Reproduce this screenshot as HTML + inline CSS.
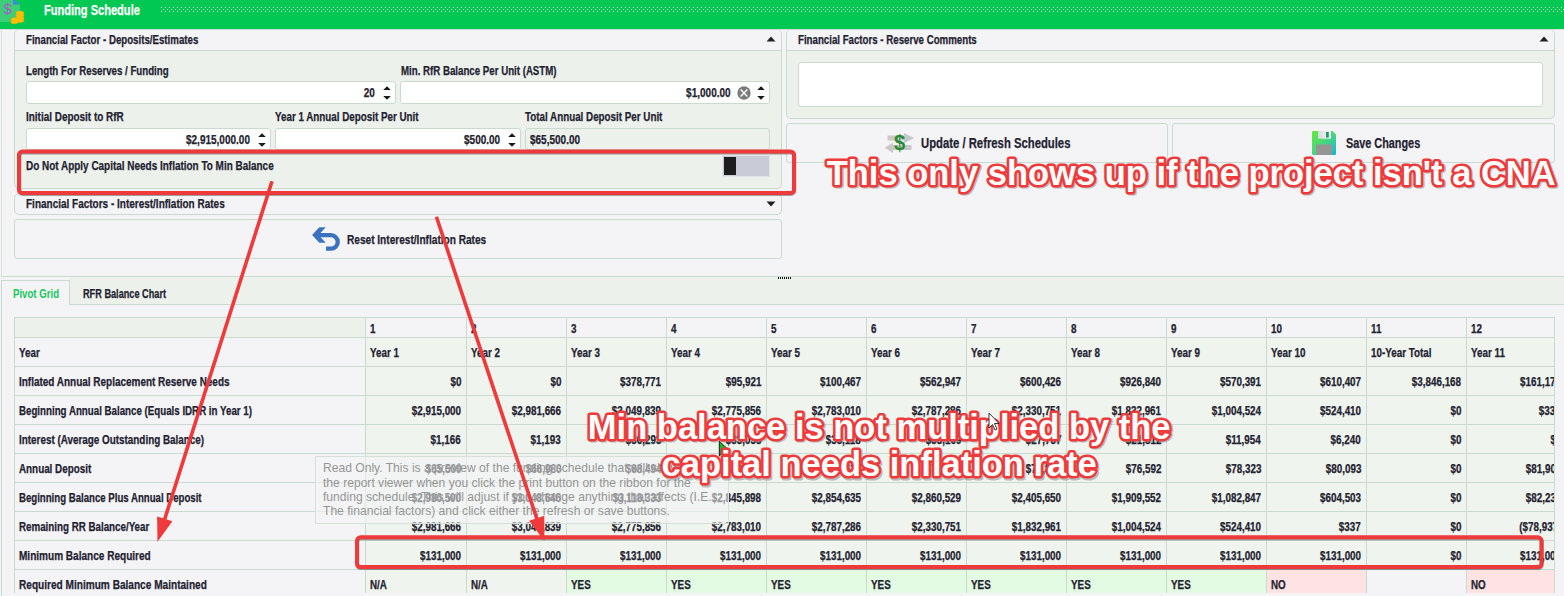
<!DOCTYPE html>
<html><head><meta charset="utf-8"><style>
html,body{margin:0;padding:0}
body{width:1564px;height:596px;overflow:hidden;position:relative;background:#f4f4f6;font-family:"Liberation Sans",sans-serif}
.r{position:absolute}
.tx{position:absolute;white-space:nowrap;line-height:normal;-webkit-text-stroke:0.25px currentColor}
</style></head><body>
<div class="r" style="left:0px;top:0px;width:1564px;height:29px;background:#00c853"></div>
<div class="r" style="left:0px;top:29px;width:1564px;height:1px;background:#dcdcdc"></div>
<svg class="r" style="left:160px;top:6px" width="1404" height="7"><defs><pattern id="dp" width="4" height="4" patternUnits="userSpaceOnUse"><rect x="1" y="1" width="1" height="1" fill="#c8f2d6"/><rect x="3" y="3" width="1" height="1" fill="#c8f2d6"/></pattern></defs><rect x="0" y="0" width="1404" height="7" fill="url(#dp)"/></svg>
<svg class="r" style="left:0;top:0" width="30" height="28" viewBox="0 0 30 28">
<rect x="0" y="0" width="20" height="22" fill="#3ccf78"/>
<path d="M15 0 L20 0 L20 5 Z" fill="#00c853"/>
<path d="M13 0 L15 0 L19.6 4.6 L13 4.6 Z" fill="#3d86e0"/>
<text x="3.4" y="14.2" font-family="Liberation Sans" font-size="15" fill="#a85cc8">$</text>
<g fill="#ffc400" stroke="#f0a800" stroke-width="0.6">
<ellipse cx="20" cy="20.5" rx="3.9" ry="1.9"/><ellipse cx="20" cy="18" rx="3.9" ry="1.9"/><ellipse cx="20" cy="15.5" rx="3.9" ry="1.9"/><ellipse cx="20" cy="13" rx="3.9" ry="1.9"/>
<ellipse cx="14.5" cy="22" rx="3.6" ry="1.8"/><ellipse cx="14.5" cy="19.5" rx="3.6" ry="1.8"/>
</g></svg>
<div class="tx" style="left:44px;top:2.33px;font-size:14px;font-weight:bold;color:#ffffff;transform:scaleX(0.79);transform-origin:0 0;">Funding Schedule</div>
<div class="r" style="left:1px;top:30px;width:1px;height:247px;background:#d6e2da"></div>
<div class="r" style="left:14px;top:29px;width:768px;height:160px;background:#ecf1ec;border:1px solid #c9dbcf;border-radius:5px;box-sizing:border-box"></div>
<div class="r" style="left:15px;top:30px;width:766px;height:20px;background:#f4f4f6;border-radius:4px 4px 0 0"></div>
<div class="r" style="left:14px;top:50px;width:768px;height:1px;background:#c9dbcf"></div>
<div class="tx" style="left:26px;top:32.69px;font-size:12.5px;font-weight:bold;color:#1f2230;transform:scaleX(0.775);transform-origin:0 0;">Financial Factor - Deposits/Estimates</div>
<svg class="r" style="left:766px;top:36px" width="10" height="6"><path d="M0.5 5.5 L5 0.5 L9.5 5.5 Z" fill="#222"/></svg>
<div class="tx" style="left:26px;top:63.69px;font-size:12.5px;font-weight:bold;color:#1f2230;transform:scaleX(0.775);transform-origin:0 0;">Length For Reserves / Funding</div>
<div class="tx" style="left:401px;top:63.69px;font-size:12.5px;font-weight:bold;color:#1f2230;transform:scaleX(0.775);transform-origin:0 0;">Min. RfR Balance Per Unit (ASTM)</div>
<div class="r" style="left:26px;top:81px;width:370px;height:23px;background:#ffffff;border:1px solid #c9dbcf;border-radius:3px;box-sizing:border-box"></div>
<div class="tx" style="right:1189.5px;top:85.69px;font-size:12.5px;font-weight:bold;color:#1f2230;transform:scaleX(0.8);transform-origin:100% 0;">20</div>
<svg class="r" style="left:382px;top:86px" width="10" height="14"><path d="M1.2 3.9 L5 0.2 L8.8 3.9 Z M1.2 9.9 L5 13.7 L8.8 9.9 Z" fill="#1a1a1a"/></svg>
<div class="r" style="left:400px;top:81px;width:370px;height:23px;background:#ffffff;border:1px solid #c9dbcf;border-radius:3px;box-sizing:border-box"></div>
<div class="tx" style="right:833.5px;top:85.69px;font-size:12.5px;font-weight:bold;color:#1f2230;transform:scaleX(0.8);transform-origin:100% 0;">$1,000.00</div>
<svg class="r" style="left:737px;top:86px" width="14" height="14"><circle cx="7" cy="7" r="6.7" fill="#7b7b7b"/><path d="M3.6 3.6 L10.4 10.4 M10.4 3.6 L3.6 10.4" stroke="#fff" stroke-width="1.35"/></svg>
<svg class="r" style="left:756px;top:86px" width="10" height="14"><path d="M1.2 3.9 L5 0.2 L8.8 3.9 Z M1.2 9.9 L5 13.7 L8.8 9.9 Z" fill="#1a1a1a"/></svg>
<div class="tx" style="left:26px;top:109.69px;font-size:12.5px;font-weight:bold;color:#1f2230;transform:scaleX(0.795);transform-origin:0 0;">Initial Deposit to RfR</div>
<div class="tx" style="left:275px;top:109.69px;font-size:12.5px;font-weight:bold;color:#1f2230;transform:scaleX(0.785);transform-origin:0 0;">Year 1 Annual Deposit Per Unit</div>
<div class="tx" style="left:525px;top:109.69px;font-size:12.5px;font-weight:bold;color:#1f2230;transform:scaleX(0.785);transform-origin:0 0;">Total Annual Deposit Per Unit</div>
<div class="r" style="left:26px;top:128px;width:245px;height:22px;background:#ffffff;border:1px solid #c9dbcf;border-radius:3px;box-sizing:border-box"></div>
<div class="tx" style="right:1314px;top:132.69px;font-size:12.5px;font-weight:bold;color:#1f2230;transform:scaleX(0.8);transform-origin:100% 0;">$2,915,000.00</div>
<svg class="r" style="left:257px;top:133px" width="10" height="14"><path d="M1.2 3.9 L5 0.2 L8.8 3.9 Z M1.2 9.9 L5 13.7 L8.8 9.9 Z" fill="#1a1a1a"/></svg>
<div class="r" style="left:275px;top:128px;width:246px;height:22px;background:#ffffff;border:1px solid #c9dbcf;border-radius:3px;box-sizing:border-box"></div>
<div class="tx" style="right:1064px;top:132.69px;font-size:12.5px;font-weight:bold;color:#1f2230;transform:scaleX(0.8);transform-origin:100% 0;">$500.00</div>
<svg class="r" style="left:507px;top:133px" width="10" height="14"><path d="M1.2 3.9 L5 0.2 L8.8 3.9 Z M1.2 9.9 L5 13.7 L8.8 9.9 Z" fill="#1a1a1a"/></svg>
<div class="r" style="left:525px;top:128px;width:245px;height:22px;background:#ecf1ec;border:1px solid #c9dbcf;border-radius:3px;box-sizing:border-box"></div>
<div class="tx" style="left:530px;top:132.69px;font-size:12.5px;font-weight:bold;color:#1f2230;transform:scaleX(0.8);transform-origin:0 0;">$65,500.00</div>
<div class="tx" style="left:26px;top:158.69px;font-size:12.5px;font-weight:bold;color:#1f2230;transform:scaleX(0.796);transform-origin:0 0;">Do Not Apply Capital Needs Inflation To Min Balance</div>
<div class="r" style="left:722px;top:155px;width:48px;height:22px;background:#c9cbd7;border:1px solid #e2e4ea;box-sizing:border-box"></div>
<div class="r" style="left:724px;top:157px;width:12px;height:18px;background:#1d1d1d"></div>
<div class="r" style="left:14px;top:193px;width:768px;height:22px;background:#f4f4f6;border:1px solid #c9dbcf;border-radius:5px;box-sizing:border-box"></div>
<div class="tx" style="left:26px;top:196.69px;font-size:12.5px;font-weight:bold;color:#1f2230;transform:scaleX(0.799);transform-origin:0 0;">Financial Factors - Interest/Inflation Rates</div>
<svg class="r" style="left:766px;top:201px" width="10" height="6"><path d="M0.5 0.5 L5 5.5 L9.5 0.5 Z" fill="#222"/></svg>
<div class="r" style="left:14px;top:219px;width:768px;height:40px;background:#f4f4f6;border:1px solid #c9dbcf;border-radius:3px;box-sizing:border-box"></div>
<svg class="r" style="left:300px;top:220px" width="50" height="36" viewBox="300 220 50 36">
<path d="M319.3 227.3 L325.7 227.3 L318.6 234.9 L325.7 242.7 L319.3 242.7 L312.1 234.9 Z" fill="#3b72c0"/>
<path d="M318 235.2 L331 235.2 A 6.75 6.75 0 0 1 331 248.7 L326 248.7" fill="none" stroke="#3b72c0" stroke-width="4.3"/></svg>
<div class="tx" style="left:347px;top:232.24px;font-size:13px;font-weight:bold;color:#1f2230;transform:scaleX(0.777);transform-origin:0 0;">Reset Interest/Inflation Rates</div>
<div class="r" style="left:786px;top:29px;width:769px;height:90px;background:#ecf1ec;border:1px solid #c9dbcf;border-radius:5px;box-sizing:border-box"></div>
<div class="r" style="left:787px;top:30px;width:767px;height:20px;background:#f4f4f6;border-radius:4px 4px 0 0"></div>
<div class="r" style="left:786px;top:50px;width:769px;height:1px;background:#c9dbcf"></div>
<div class="tx" style="left:798px;top:32.69px;font-size:12.5px;font-weight:bold;color:#1f2230;transform:scaleX(0.775);transform-origin:0 0;">Financial Factors - Reserve Comments</div>
<svg class="r" style="left:1539px;top:36px" width="10" height="6"><path d="M0.5 5.5 L5 0.5 L9.5 5.5 Z" fill="#222"/></svg>
<div class="r" style="left:798px;top:62px;width:745px;height:45px;background:#fff;border:1px solid #c9dbcf;border-radius:3px;box-sizing:border-box"></div>
<div class="r" style="left:786px;top:123px;width:382px;height:40px;background:#f4f4f6;border:1px solid #c9dbcf;border-radius:3px;box-sizing:border-box"></div>
<svg class="r" style="left:880px;top:128px" width="40" height="30" viewBox="880 128 40 30">
<path d="M887.5 135.6 L904 135.6 L904 133 L914 138 L904 143.2 L904 140.4 L887.5 140.4 Z" fill="#c8c8c8"/>
<path d="M911.5 145 L893 145 L893 142.5 L884.8 147.7 L893 153 L893 150 L911.5 150 Z" fill="#c8c8c8"/>
<text x="899.6" y="150.5" text-anchor="middle" font-family="Liberation Sans" font-weight="bold" font-size="22" fill="#2a8a36" transform="translate(899.6 0) scale(0.92 1) translate(-899.6 0)">$</text></svg>
<div class="tx" style="left:920.5px;top:135.33px;font-size:14px;font-weight:bold;color:#1f2230;transform:scaleX(0.807);transform-origin:0 0;">Update / Refresh Schedules</div>
<div class="r" style="left:1172px;top:123px;width:383px;height:40px;background:#f4f4f6;border:1px solid #c9dbcf;border-radius:3px;box-sizing:border-box"></div>
<svg class="r" style="left:1312px;top:131px" width="24" height="24" viewBox="0 0 24 24">
<defs><linearGradient id="fg" x1="0" y1="0" x2="1" y2="1"><stop offset="0" stop-color="#62ea3c"/><stop offset="0.5" stop-color="#48d67e"/><stop offset="1" stop-color="#1ab4d8"/></linearGradient>
<linearGradient id="sg" x1="0" y1="0" x2="1" y2="0"><stop offset="0" stop-color="#d8d8d8"/><stop offset="1" stop-color="#f6f6f6"/></linearGradient></defs>
<path d="M1 0 L20.5 0 L24 3.5 L24 22.8 Q24 24 22.8 24 L1.2 24 Q0 24 0 22.8 L0 1.2 Q0 0 1 0 Z" fill="url(#fg)"/>
<path d="M6 0 L19 0 L19 6.8 Q19 7.7 18 7.7 L7 7.7 Q6 7.7 6 6.8 Z" fill="url(#sg)"/><rect x="14" y="1" width="2.8" height="5.6" fill="#1f9a6a"/>
<path d="M4 14.5 Q4 13.5 5 13.5 L19 13.5 Q20 13.5 20 14.5 L20 24 L4 24 Z" fill="#959595"/></svg>
<div class="tx" style="left:1345.5px;top:135.33px;font-size:14px;font-weight:bold;color:#1f2230;transform:scaleX(0.775);transform-origin:0 0;">Save Changes</div>
<div class="r" style="left:1px;top:276px;width:1564px;height:1px;background:#c9dbcf"></div>
<div class="r" style="left:70px;top:277px;width:1564px;height:28px;background:#ecf1ec"></div>
<div class="r" style="left:1px;top:304px;width:1564px;height:1px;background:#c9dbcf"></div>
<div class="r" style="left:1px;top:280px;width:69px;height:25px;background:#f4f4f6;border:1px solid #c9dbcf;border-bottom:none;box-sizing:border-box"></div>
<svg class="r" style="left:778px;top:277px" width="14" height="3"><g fill="#111"><rect x="0" y="0" width="1" height="2"/><rect x="2" y="0" width="1" height="2"/><rect x="4" y="0" width="1" height="2"/><rect x="6" y="0" width="1" height="2"/><rect x="8" y="0" width="1" height="2"/><rect x="10" y="0" width="1" height="2"/><rect x="12" y="0" width="1" height="2"/></g></svg>
<div class="r" style="left:1px;top:305px;width:1px;height:291px;background:#c9dbcf"></div>
<div class="tx" style="left:12.8px;top:286.96px;font-size:12.2px;font-weight:bold;color:#16c75e;transform:scaleX(0.79);transform-origin:0 0;-webkit-text-stroke:0">Pivot Grid</div>
<div class="tx" style="left:83px;top:286.96px;font-size:12.2px;font-weight:bold;color:#1f2230;transform:scaleX(0.752);transform-origin:0 0;">RFR Balance Chart</div>
<div class="r" style="left:14px;top:317px;width:1541px;height:276px;overflow:hidden">
<div class="r" style="left:0px;top:0px;width:351px;height:20px;background:#ecf1ec"></div>
<div class="r" style="left:0px;top:20px;width:351px;height:256px;background:#f4f4f6"></div>
<div class="r" style="left:351px;top:0px;width:1201px;height:20px;background:#f4f4f6"></div>
<div class="r" style="left:351px;top:20px;width:1201px;height:256px;background:#f0f4ef"></div>
<div class="r" style="left:553px;top:253px;width:99px;height:28px;background:#e3fbe3"></div>
<div class="r" style="left:653px;top:253px;width:99px;height:28px;background:#e3fbe3"></div>
<div class="r" style="left:753px;top:253px;width:99px;height:28px;background:#e3fbe3"></div>
<div class="r" style="left:853px;top:253px;width:99px;height:28px;background:#e3fbe3"></div>
<div class="r" style="left:953px;top:253px;width:99px;height:28px;background:#e3fbe3"></div>
<div class="r" style="left:1053px;top:253px;width:99px;height:28px;background:#e3fbe3"></div>
<div class="r" style="left:1153px;top:253px;width:99px;height:28px;background:#e3fbe3"></div>
<div class="r" style="left:1253px;top:253px;width:99px;height:28px;background:#ffe3e3"></div>
<div class="r" style="left:1353px;top:253px;width:99px;height:28px;background:#f4f4f6"></div>
<div class="r" style="left:1453px;top:253px;width:99px;height:28px;background:#ffe3e3"></div>
<div class="r" style="left:0px;top:0px;width:1552px;height:1px;background:#c9dbcf"></div>
<div class="r" style="left:0px;top:20px;width:1552px;height:1px;background:#c9dbcf"></div>
<div class="r" style="left:0px;top:49px;width:1552px;height:1px;background:#c9dbcf"></div>
<div class="r" style="left:0px;top:78px;width:1552px;height:1px;background:#c9dbcf"></div>
<div class="r" style="left:0px;top:107px;width:1552px;height:1px;background:#c9dbcf"></div>
<div class="r" style="left:0px;top:136px;width:1552px;height:1px;background:#c9dbcf"></div>
<div class="r" style="left:0px;top:165px;width:1552px;height:1px;background:#c9dbcf"></div>
<div class="r" style="left:0px;top:194px;width:1552px;height:1px;background:#c9dbcf"></div>
<div class="r" style="left:0px;top:223px;width:1552px;height:1px;background:#c9dbcf"></div>
<div class="r" style="left:0px;top:252px;width:1552px;height:1px;background:#c9dbcf"></div>
<div class="r" style="left:0px;top:281px;width:1552px;height:1px;background:#c9dbcf"></div>
<div class="r" style="left:0px;top:0px;width:1px;height:280px;background:#c9dbcf"></div>
<div class="r" style="left:351px;top:0px;width:1px;height:280px;background:#c9dbcf"></div>
<div class="r" style="left:452px;top:0px;width:1px;height:280px;background:#c9dbcf"></div>
<div class="r" style="left:552px;top:0px;width:1px;height:280px;background:#c9dbcf"></div>
<div class="r" style="left:652px;top:0px;width:1px;height:280px;background:#c9dbcf"></div>
<div class="r" style="left:752px;top:0px;width:1px;height:280px;background:#c9dbcf"></div>
<div class="r" style="left:852px;top:0px;width:1px;height:280px;background:#c9dbcf"></div>
<div class="r" style="left:952px;top:0px;width:1px;height:280px;background:#c9dbcf"></div>
<div class="r" style="left:1052px;top:0px;width:1px;height:280px;background:#c9dbcf"></div>
<div class="r" style="left:1152px;top:0px;width:1px;height:280px;background:#c9dbcf"></div>
<div class="r" style="left:1252px;top:0px;width:1px;height:280px;background:#c9dbcf"></div>
<div class="r" style="left:1352px;top:0px;width:1px;height:280px;background:#c9dbcf"></div>
<div class="r" style="left:1452px;top:0px;width:1px;height:280px;background:#c9dbcf"></div>
<div class="r" style="left:1552px;top:0px;width:1px;height:280px;background:#c9dbcf"></div>
<div class="tx" style="left:5px;top:29.14px;font-size:12px;font-weight:bold;color:#1f2230;transform:scaleX(0.82);transform-origin:0 0">Year</div>
<div class="tx" style="left:356px;top:5.14px;font-size:12px;font-weight:bold;color:#1f2230;transform:scaleX(0.82);transform-origin:0 0">1</div>
<div class="tx" style="left:356px;top:29.14px;font-size:12px;font-weight:bold;color:#1f2230;transform:scaleX(0.82);transform-origin:0 0">Year 1</div>
<div class="tx" style="left:457px;top:5.14px;font-size:12px;font-weight:bold;color:#1f2230;transform:scaleX(0.82);transform-origin:0 0">2</div>
<div class="tx" style="left:457px;top:29.14px;font-size:12px;font-weight:bold;color:#1f2230;transform:scaleX(0.82);transform-origin:0 0">Year 2</div>
<div class="tx" style="left:557px;top:5.14px;font-size:12px;font-weight:bold;color:#1f2230;transform:scaleX(0.82);transform-origin:0 0">3</div>
<div class="tx" style="left:557px;top:29.14px;font-size:12px;font-weight:bold;color:#1f2230;transform:scaleX(0.82);transform-origin:0 0">Year 3</div>
<div class="tx" style="left:657px;top:5.14px;font-size:12px;font-weight:bold;color:#1f2230;transform:scaleX(0.82);transform-origin:0 0">4</div>
<div class="tx" style="left:657px;top:29.14px;font-size:12px;font-weight:bold;color:#1f2230;transform:scaleX(0.82);transform-origin:0 0">Year 4</div>
<div class="tx" style="left:757px;top:5.14px;font-size:12px;font-weight:bold;color:#1f2230;transform:scaleX(0.82);transform-origin:0 0">5</div>
<div class="tx" style="left:757px;top:29.14px;font-size:12px;font-weight:bold;color:#1f2230;transform:scaleX(0.82);transform-origin:0 0">Year 5</div>
<div class="tx" style="left:857px;top:5.14px;font-size:12px;font-weight:bold;color:#1f2230;transform:scaleX(0.82);transform-origin:0 0">6</div>
<div class="tx" style="left:857px;top:29.14px;font-size:12px;font-weight:bold;color:#1f2230;transform:scaleX(0.82);transform-origin:0 0">Year 6</div>
<div class="tx" style="left:957px;top:5.14px;font-size:12px;font-weight:bold;color:#1f2230;transform:scaleX(0.82);transform-origin:0 0">7</div>
<div class="tx" style="left:957px;top:29.14px;font-size:12px;font-weight:bold;color:#1f2230;transform:scaleX(0.82);transform-origin:0 0">Year 7</div>
<div class="tx" style="left:1057px;top:5.14px;font-size:12px;font-weight:bold;color:#1f2230;transform:scaleX(0.82);transform-origin:0 0">8</div>
<div class="tx" style="left:1057px;top:29.14px;font-size:12px;font-weight:bold;color:#1f2230;transform:scaleX(0.82);transform-origin:0 0">Year 8</div>
<div class="tx" style="left:1157px;top:5.14px;font-size:12px;font-weight:bold;color:#1f2230;transform:scaleX(0.82);transform-origin:0 0">9</div>
<div class="tx" style="left:1157px;top:29.14px;font-size:12px;font-weight:bold;color:#1f2230;transform:scaleX(0.82);transform-origin:0 0">Year 9</div>
<div class="tx" style="left:1257px;top:5.14px;font-size:12px;font-weight:bold;color:#1f2230;transform:scaleX(0.82);transform-origin:0 0">10</div>
<div class="tx" style="left:1257px;top:29.14px;font-size:12px;font-weight:bold;color:#1f2230;transform:scaleX(0.82);transform-origin:0 0">Year 10</div>
<div class="tx" style="left:1357px;top:5.14px;font-size:12px;font-weight:bold;color:#1f2230;transform:scaleX(0.82);transform-origin:0 0">11</div>
<div class="tx" style="left:1357px;top:29.14px;font-size:12px;font-weight:bold;color:#1f2230;transform:scaleX(0.82);transform-origin:0 0">10-Year Total</div>
<div class="tx" style="left:1457px;top:5.14px;font-size:12px;font-weight:bold;color:#1f2230;transform:scaleX(0.82);transform-origin:0 0">12</div>
<div class="tx" style="left:1457px;top:29.14px;font-size:12px;font-weight:bold;color:#1f2230;transform:scaleX(0.82);transform-origin:0 0">Year 11</div>
<div class="tx" style="left:5px;top:58.14px;font-size:12px;font-weight:bold;color:#1f2230;transform:scaleX(0.83);transform-origin:0 0">Inflated Annual Replacement Reserve Needs</div>
<div class="tx" style="right:1094px;top:58.14px;font-size:12px;font-weight:bold;color:#1f2230;transform:scaleX(0.82);transform-origin:100% 0">$0</div>
<div class="tx" style="right:994px;top:58.14px;font-size:12px;font-weight:bold;color:#1f2230;transform:scaleX(0.82);transform-origin:100% 0">$0</div>
<div class="tx" style="right:894px;top:58.14px;font-size:12px;font-weight:bold;color:#1f2230;transform:scaleX(0.82);transform-origin:100% 0">$378,771</div>
<div class="tx" style="right:794px;top:58.14px;font-size:12px;font-weight:bold;color:#1f2230;transform:scaleX(0.82);transform-origin:100% 0">$95,921</div>
<div class="tx" style="right:694px;top:58.14px;font-size:12px;font-weight:bold;color:#1f2230;transform:scaleX(0.82);transform-origin:100% 0">$100,467</div>
<div class="tx" style="right:594px;top:58.14px;font-size:12px;font-weight:bold;color:#1f2230;transform:scaleX(0.82);transform-origin:100% 0">$562,947</div>
<div class="tx" style="right:494px;top:58.14px;font-size:12px;font-weight:bold;color:#1f2230;transform:scaleX(0.82);transform-origin:100% 0">$600,426</div>
<div class="tx" style="right:394px;top:58.14px;font-size:12px;font-weight:bold;color:#1f2230;transform:scaleX(0.82);transform-origin:100% 0">$926,840</div>
<div class="tx" style="right:294px;top:58.14px;font-size:12px;font-weight:bold;color:#1f2230;transform:scaleX(0.82);transform-origin:100% 0">$570,391</div>
<div class="tx" style="right:194px;top:58.14px;font-size:12px;font-weight:bold;color:#1f2230;transform:scaleX(0.82);transform-origin:100% 0">$610,407</div>
<div class="tx" style="right:94px;top:58.14px;font-size:12px;font-weight:bold;color:#1f2230;transform:scaleX(0.82);transform-origin:100% 0">$3,846,168</div>
<div class="tx" style="right:-6px;top:58.14px;font-size:12px;font-weight:bold;color:#1f2230;transform:scaleX(0.82);transform-origin:100% 0">$161,179</div>
<div class="tx" style="left:5px;top:87.14px;font-size:12px;font-weight:bold;color:#1f2230;transform:scaleX(0.8105);transform-origin:0 0">Beginning Annual Balance (Equals IDRR in Year 1)</div>
<div class="tx" style="right:1094px;top:87.14px;font-size:12px;font-weight:bold;color:#1f2230;transform:scaleX(0.82);transform-origin:100% 0">$2,915,000</div>
<div class="tx" style="right:994px;top:87.14px;font-size:12px;font-weight:bold;color:#1f2230;transform:scaleX(0.82);transform-origin:100% 0">$2,981,666</div>
<div class="tx" style="right:894px;top:87.14px;font-size:12px;font-weight:bold;color:#1f2230;transform:scaleX(0.82);transform-origin:100% 0">$3,049,839</div>
<div class="tx" style="right:794px;top:87.14px;font-size:12px;font-weight:bold;color:#1f2230;transform:scaleX(0.82);transform-origin:100% 0">$2,775,856</div>
<div class="tx" style="right:694px;top:87.14px;font-size:12px;font-weight:bold;color:#1f2230;transform:scaleX(0.82);transform-origin:100% 0">$2,783,010</div>
<div class="tx" style="right:594px;top:87.14px;font-size:12px;font-weight:bold;color:#1f2230;transform:scaleX(0.82);transform-origin:100% 0">$2,787,286</div>
<div class="tx" style="right:494px;top:87.14px;font-size:12px;font-weight:bold;color:#1f2230;transform:scaleX(0.82);transform-origin:100% 0">$2,330,751</div>
<div class="tx" style="right:394px;top:87.14px;font-size:12px;font-weight:bold;color:#1f2230;transform:scaleX(0.82);transform-origin:100% 0">$1,832,961</div>
<div class="tx" style="right:294px;top:87.14px;font-size:12px;font-weight:bold;color:#1f2230;transform:scaleX(0.82);transform-origin:100% 0">$1,004,524</div>
<div class="tx" style="right:194px;top:87.14px;font-size:12px;font-weight:bold;color:#1f2230;transform:scaleX(0.82);transform-origin:100% 0">$524,410</div>
<div class="tx" style="right:94px;top:87.14px;font-size:12px;font-weight:bold;color:#1f2230;transform:scaleX(0.82);transform-origin:100% 0">$0</div>
<div class="tx" style="right:-6px;top:87.14px;font-size:12px;font-weight:bold;color:#1f2230;transform:scaleX(0.82);transform-origin:100% 0">$337</div>
<div class="tx" style="left:5px;top:116.14px;font-size:12px;font-weight:bold;color:#1f2230;transform:scaleX(0.823);transform-origin:0 0">Interest (Average Outstanding Balance)</div>
<div class="tx" style="right:1094px;top:116.14px;font-size:12px;font-weight:bold;color:#1f2230;transform:scaleX(0.82);transform-origin:100% 0">$1,166</div>
<div class="tx" style="right:994px;top:116.14px;font-size:12px;font-weight:bold;color:#1f2230;transform:scaleX(0.82);transform-origin:100% 0">$1,193</div>
<div class="tx" style="right:894px;top:116.14px;font-size:12px;font-weight:bold;color:#1f2230;transform:scaleX(0.82);transform-origin:100% 0">$36,293</div>
<div class="tx" style="right:794px;top:116.14px;font-size:12px;font-weight:bold;color:#1f2230;transform:scaleX(0.82);transform-origin:100% 0">$33,033</div>
<div class="tx" style="right:694px;top:116.14px;font-size:12px;font-weight:bold;color:#1f2230;transform:scaleX(0.82);transform-origin:100% 0">$33,118</div>
<div class="tx" style="right:594px;top:116.14px;font-size:12px;font-weight:bold;color:#1f2230;transform:scaleX(0.82);transform-origin:100% 0">$33,169</div>
<div class="tx" style="right:494px;top:116.14px;font-size:12px;font-weight:bold;color:#1f2230;transform:scaleX(0.82);transform-origin:100% 0">$27,737</div>
<div class="tx" style="right:394px;top:116.14px;font-size:12px;font-weight:bold;color:#1f2230;transform:scaleX(0.82);transform-origin:100% 0">$21,812</div>
<div class="tx" style="right:294px;top:116.14px;font-size:12px;font-weight:bold;color:#1f2230;transform:scaleX(0.82);transform-origin:100% 0">$11,954</div>
<div class="tx" style="right:194px;top:116.14px;font-size:12px;font-weight:bold;color:#1f2230;transform:scaleX(0.82);transform-origin:100% 0">$6,240</div>
<div class="tx" style="right:94px;top:116.14px;font-size:12px;font-weight:bold;color:#1f2230;transform:scaleX(0.82);transform-origin:100% 0">$0</div>
<div class="tx" style="right:-6px;top:116.14px;font-size:12px;font-weight:bold;color:#1f2230;transform:scaleX(0.82);transform-origin:100% 0">$5</div>
<div class="tx" style="left:5px;top:145.14px;font-size:12px;font-weight:bold;color:#1f2230;transform:scaleX(0.82);transform-origin:0 0">Annual Deposit</div>
<div class="tx" style="right:1094px;top:145.14px;font-size:12px;font-weight:bold;color:#1f2230;transform:scaleX(0.82);transform-origin:100% 0">$65,500</div>
<div class="tx" style="right:994px;top:145.14px;font-size:12px;font-weight:bold;color:#1f2230;transform:scaleX(0.82);transform-origin:100% 0">$66,980</div>
<div class="tx" style="right:894px;top:145.14px;font-size:12px;font-weight:bold;color:#1f2230;transform:scaleX(0.82);transform-origin:100% 0">$68,494</div>
<div class="tx" style="right:794px;top:145.14px;font-size:12px;font-weight:bold;color:#1f2230;transform:scaleX(0.82);transform-origin:100% 0">$70,042</div>
<div class="tx" style="right:694px;top:145.14px;font-size:12px;font-weight:bold;color:#1f2230;transform:scaleX(0.82);transform-origin:100% 0">$71,625</div>
<div class="tx" style="right:594px;top:145.14px;font-size:12px;font-weight:bold;color:#1f2230;transform:scaleX(0.82);transform-origin:100% 0">$73,243</div>
<div class="tx" style="right:494px;top:145.14px;font-size:12px;font-weight:bold;color:#1f2230;transform:scaleX(0.82);transform-origin:100% 0">$74,899</div>
<div class="tx" style="right:394px;top:145.14px;font-size:12px;font-weight:bold;color:#1f2230;transform:scaleX(0.82);transform-origin:100% 0">$76,592</div>
<div class="tx" style="right:294px;top:145.14px;font-size:12px;font-weight:bold;color:#1f2230;transform:scaleX(0.82);transform-origin:100% 0">$78,323</div>
<div class="tx" style="right:194px;top:145.14px;font-size:12px;font-weight:bold;color:#1f2230;transform:scaleX(0.82);transform-origin:100% 0">$80,093</div>
<div class="tx" style="right:94px;top:145.14px;font-size:12px;font-weight:bold;color:#1f2230;transform:scaleX(0.82);transform-origin:100% 0">$0</div>
<div class="tx" style="right:-6px;top:145.14px;font-size:12px;font-weight:bold;color:#1f2230;transform:scaleX(0.82);transform-origin:100% 0">$81,904</div>
<div class="tx" style="left:5px;top:174.14px;font-size:12px;font-weight:bold;color:#1f2230;transform:scaleX(0.802);transform-origin:0 0">Beginning Balance Plus Annual Deposit</div>
<div class="tx" style="right:1094px;top:174.14px;font-size:12px;font-weight:bold;color:#1f2230;transform:scaleX(0.82);transform-origin:100% 0">$2,980,500</div>
<div class="tx" style="right:994px;top:174.14px;font-size:12px;font-weight:bold;color:#1f2230;transform:scaleX(0.82);transform-origin:100% 0">$3,048,646</div>
<div class="tx" style="right:894px;top:174.14px;font-size:12px;font-weight:bold;color:#1f2230;transform:scaleX(0.82);transform-origin:100% 0">$3,118,333</div>
<div class="tx" style="right:794px;top:174.14px;font-size:12px;font-weight:bold;color:#1f2230;transform:scaleX(0.82);transform-origin:100% 0">$2,845,898</div>
<div class="tx" style="right:694px;top:174.14px;font-size:12px;font-weight:bold;color:#1f2230;transform:scaleX(0.82);transform-origin:100% 0">$2,854,635</div>
<div class="tx" style="right:594px;top:174.14px;font-size:12px;font-weight:bold;color:#1f2230;transform:scaleX(0.82);transform-origin:100% 0">$2,860,529</div>
<div class="tx" style="right:494px;top:174.14px;font-size:12px;font-weight:bold;color:#1f2230;transform:scaleX(0.82);transform-origin:100% 0">$2,405,650</div>
<div class="tx" style="right:394px;top:174.14px;font-size:12px;font-weight:bold;color:#1f2230;transform:scaleX(0.82);transform-origin:100% 0">$1,909,552</div>
<div class="tx" style="right:294px;top:174.14px;font-size:12px;font-weight:bold;color:#1f2230;transform:scaleX(0.82);transform-origin:100% 0">$1,082,847</div>
<div class="tx" style="right:194px;top:174.14px;font-size:12px;font-weight:bold;color:#1f2230;transform:scaleX(0.82);transform-origin:100% 0">$604,503</div>
<div class="tx" style="right:94px;top:174.14px;font-size:12px;font-weight:bold;color:#1f2230;transform:scaleX(0.82);transform-origin:100% 0">$0</div>
<div class="tx" style="right:-6px;top:174.14px;font-size:12px;font-weight:bold;color:#1f2230;transform:scaleX(0.82);transform-origin:100% 0">$82,237</div>
<div class="tx" style="left:5px;top:203.14px;font-size:12px;font-weight:bold;color:#1f2230;transform:scaleX(0.814);transform-origin:0 0">Remaining RR Balance/Year</div>
<div class="tx" style="right:1094px;top:203.14px;font-size:12px;font-weight:bold;color:#1f2230;transform:scaleX(0.82);transform-origin:100% 0">$2,981,666</div>
<div class="tx" style="right:994px;top:203.14px;font-size:12px;font-weight:bold;color:#1f2230;transform:scaleX(0.82);transform-origin:100% 0">$3,049,839</div>
<div class="tx" style="right:894px;top:203.14px;font-size:12px;font-weight:bold;color:#1f2230;transform:scaleX(0.82);transform-origin:100% 0">$2,775,856</div>
<div class="tx" style="right:794px;top:203.14px;font-size:12px;font-weight:bold;color:#1f2230;transform:scaleX(0.82);transform-origin:100% 0">$2,783,010</div>
<div class="tx" style="right:694px;top:203.14px;font-size:12px;font-weight:bold;color:#1f2230;transform:scaleX(0.82);transform-origin:100% 0">$2,787,286</div>
<div class="tx" style="right:594px;top:203.14px;font-size:12px;font-weight:bold;color:#1f2230;transform:scaleX(0.82);transform-origin:100% 0">$2,330,751</div>
<div class="tx" style="right:494px;top:203.14px;font-size:12px;font-weight:bold;color:#1f2230;transform:scaleX(0.82);transform-origin:100% 0">$1,832,961</div>
<div class="tx" style="right:394px;top:203.14px;font-size:12px;font-weight:bold;color:#1f2230;transform:scaleX(0.82);transform-origin:100% 0">$1,004,524</div>
<div class="tx" style="right:294px;top:203.14px;font-size:12px;font-weight:bold;color:#1f2230;transform:scaleX(0.82);transform-origin:100% 0">$524,410</div>
<div class="tx" style="right:194px;top:203.14px;font-size:12px;font-weight:bold;color:#1f2230;transform:scaleX(0.82);transform-origin:100% 0">$337</div>
<div class="tx" style="right:94px;top:203.14px;font-size:12px;font-weight:bold;color:#1f2230;transform:scaleX(0.82);transform-origin:100% 0">$0</div>
<div class="tx" style="right:-6px;top:203.14px;font-size:12px;font-weight:bold;color:#1f2230;transform:scaleX(0.82);transform-origin:100% 0">($78,937)</div>
<div class="tx" style="left:5px;top:232.14px;font-size:12px;font-weight:bold;color:#1f2230;transform:scaleX(0.837);transform-origin:0 0">Minimum Balance Required</div>
<div class="tx" style="right:1094px;top:232.14px;font-size:12px;font-weight:bold;color:#1f2230;transform:scaleX(0.82);transform-origin:100% 0">$131,000</div>
<div class="tx" style="right:994px;top:232.14px;font-size:12px;font-weight:bold;color:#1f2230;transform:scaleX(0.82);transform-origin:100% 0">$131,000</div>
<div class="tx" style="right:894px;top:232.14px;font-size:12px;font-weight:bold;color:#1f2230;transform:scaleX(0.82);transform-origin:100% 0">$131,000</div>
<div class="tx" style="right:794px;top:232.14px;font-size:12px;font-weight:bold;color:#1f2230;transform:scaleX(0.82);transform-origin:100% 0">$131,000</div>
<div class="tx" style="right:694px;top:232.14px;font-size:12px;font-weight:bold;color:#1f2230;transform:scaleX(0.82);transform-origin:100% 0">$131,000</div>
<div class="tx" style="right:594px;top:232.14px;font-size:12px;font-weight:bold;color:#1f2230;transform:scaleX(0.82);transform-origin:100% 0">$131,000</div>
<div class="tx" style="right:494px;top:232.14px;font-size:12px;font-weight:bold;color:#1f2230;transform:scaleX(0.82);transform-origin:100% 0">$131,000</div>
<div class="tx" style="right:394px;top:232.14px;font-size:12px;font-weight:bold;color:#1f2230;transform:scaleX(0.82);transform-origin:100% 0">$131,000</div>
<div class="tx" style="right:294px;top:232.14px;font-size:12px;font-weight:bold;color:#1f2230;transform:scaleX(0.82);transform-origin:100% 0">$131,000</div>
<div class="tx" style="right:194px;top:232.14px;font-size:12px;font-weight:bold;color:#1f2230;transform:scaleX(0.82);transform-origin:100% 0">$131,000</div>
<div class="tx" style="right:94px;top:232.14px;font-size:12px;font-weight:bold;color:#1f2230;transform:scaleX(0.82);transform-origin:100% 0">$0</div>
<div class="tx" style="right:-6px;top:232.14px;font-size:12px;font-weight:bold;color:#1f2230;transform:scaleX(0.82);transform-origin:100% 0">$131,000</div>
<div class="tx" style="left:5px;top:261.14px;font-size:12px;font-weight:bold;color:#1f2230;transform:scaleX(0.841);transform-origin:0 0">Required Minimum Balance Maintained</div>
<div class="tx" style="left:356px;top:261.14px;font-size:12px;font-weight:bold;color:#1f2230;transform:scaleX(0.82);transform-origin:0 0">N/A</div>
<div class="tx" style="left:457px;top:261.14px;font-size:12px;font-weight:bold;color:#1f2230;transform:scaleX(0.82);transform-origin:0 0">N/A</div>
<div class="tx" style="left:557px;top:261.14px;font-size:12px;font-weight:bold;color:#1f2230;transform:scaleX(0.82);transform-origin:0 0">YES</div>
<div class="tx" style="left:657px;top:261.14px;font-size:12px;font-weight:bold;color:#1f2230;transform:scaleX(0.82);transform-origin:0 0">YES</div>
<div class="tx" style="left:757px;top:261.14px;font-size:12px;font-weight:bold;color:#1f2230;transform:scaleX(0.82);transform-origin:0 0">YES</div>
<div class="tx" style="left:857px;top:261.14px;font-size:12px;font-weight:bold;color:#1f2230;transform:scaleX(0.82);transform-origin:0 0">YES</div>
<div class="tx" style="left:957px;top:261.14px;font-size:12px;font-weight:bold;color:#1f2230;transform:scaleX(0.82);transform-origin:0 0">YES</div>
<div class="tx" style="left:1057px;top:261.14px;font-size:12px;font-weight:bold;color:#1f2230;transform:scaleX(0.82);transform-origin:0 0">YES</div>
<div class="tx" style="left:1157px;top:261.14px;font-size:12px;font-weight:bold;color:#1f2230;transform:scaleX(0.82);transform-origin:0 0">YES</div>
<div class="tx" style="left:1257px;top:261.14px;font-size:12px;font-weight:bold;color:#1f2230;transform:scaleX(0.82);transform-origin:0 0">NO</div>
<div class="tx" style="left:1457px;top:261.14px;font-size:12px;font-weight:bold;color:#1f2230;transform:scaleX(0.82);transform-origin:0 0">NO</div>
</div>
<div class="r" style="left:1554px;top:317px;width:1px;height:276px;background:#c9dbcf"></div>
<div class="r" style="left:315px;top:456px;width:414px;height:68px;background:rgba(244,244,246,0.55);border:1px solid #d4e0d8;box-sizing:border-box"></div>
<div class="tx" style="left:322.5px;top:460.24px;font-size:13px;font-weight:normal;color:#949494;transform:scaleX(0.93);transform-origin:0 0;-webkit-text-stroke:0">Read Only. This is a preview of the funding schedule that will show in</div>
<div class="tx" style="left:322.5px;top:474.54px;font-size:13px;font-weight:normal;color:#949494;transform:scaleX(0.93);transform-origin:0 0;-webkit-text-stroke:0">the report viewer when you click the print button on the ribbon for the</div>
<div class="tx" style="left:322.5px;top:488.84px;font-size:13px;font-weight:normal;color:#949494;transform:scaleX(0.93);transform-origin:0 0;-webkit-text-stroke:0">funding schedule. This will adjust if you change anything that affects (I.E.</div>
<div class="tx" style="left:322.5px;top:503.13px;font-size:13px;font-weight:normal;color:#949494;transform:scaleX(0.93);transform-origin:0 0;-webkit-text-stroke:0">The financial factors) and click either the refresh or save buttons.</div>
<svg class="r" style="left:0;top:0" width="1564" height="596" font-family="Liberation Sans" font-weight="bold"><rect x="19" y="151.5" width="775" height="41.5" rx="3.5" fill="none" stroke="#333" stroke-width="4" opacity="0.45" transform="translate(0.3,0.9)"/><rect x="19" y="151.5" width="775" height="41.5" rx="3.5" fill="none" stroke="#ee3a3b" stroke-width="4"/><rect x="357" y="537.3" width="1184.5" height="29.8" rx="3.5" fill="none" stroke="#333" stroke-width="4" opacity="0.45" transform="translate(0.3,0.9)"/><rect x="357" y="537.3" width="1184.5" height="29.8" rx="3.5" fill="none" stroke="#ee3a3b" stroke-width="4"/><line x1="272" y1="181.3" x2="163.0" y2="524.5" stroke="#ee3a3b" stroke-width="3.6"/><path d="M157.5 541.7 L157.1 516.4 L172.4 521.2 Z" fill="#ee3a3b"/><line x1="436.4" y1="216.7" x2="538.6" y2="523.9" stroke="#ee3a3b" stroke-width="3.6"/><path d="M544.3 541 L529.1 520.8 L544.3 515.7 Z" fill="#ee3a3b"/><path d="M719.3 441.2 L719.3 456 L723.5 452 L729.5 450.8 Z" fill="#22b322" stroke="#0c0c0c" stroke-width="0.9" stroke-linejoin="round"/><text x="1192.4" y="186.1" text-anchor="middle" font-size="34.5" word-spacing="0" fill="#777" stroke="#777" stroke-width="5.2" stroke-linejoin="round" opacity="0.45">This only shows up if the project isn't a CNA</text><text x="1191.2" y="184.6" text-anchor="middle" font-size="34.5" word-spacing="0" fill="#fff" stroke="#ee3a3b" stroke-width="5.2" stroke-linejoin="round" paint-order="stroke">This only shows up if the project isn't a CNA</text><text x="880.4000000000001" y="440.0" text-anchor="middle" font-size="34.5" word-spacing="0" fill="#777" stroke="#777" stroke-width="5.2" stroke-linejoin="round" opacity="0.45">Min balance is not multiplied by the</text><text x="879.2" y="438.5" text-anchor="middle" font-size="34.5" word-spacing="0" fill="#fff" stroke="#ee3a3b" stroke-width="5.2" stroke-linejoin="round" paint-order="stroke">Min balance is not multiplied by the</text><text x="880.4000000000001" y="477.5" text-anchor="middle" font-size="34.5" word-spacing="0" fill="#777" stroke="#777" stroke-width="5.2" stroke-linejoin="round" opacity="0.45">capital needs inflation rate</text><text x="879.2" y="476" text-anchor="middle" font-size="34.5" word-spacing="0" fill="#fff" stroke="#ee3a3b" stroke-width="5.2" stroke-linejoin="round" paint-order="stroke">capital needs inflation rate</text><path d="M989 413 L989 428 L992.5 424.5 L995 430 L997 429 L994.5 423.5 L999 423.5 Z" fill="#fff" stroke="#222" stroke-width="0.9"/></svg>
</body></html>
